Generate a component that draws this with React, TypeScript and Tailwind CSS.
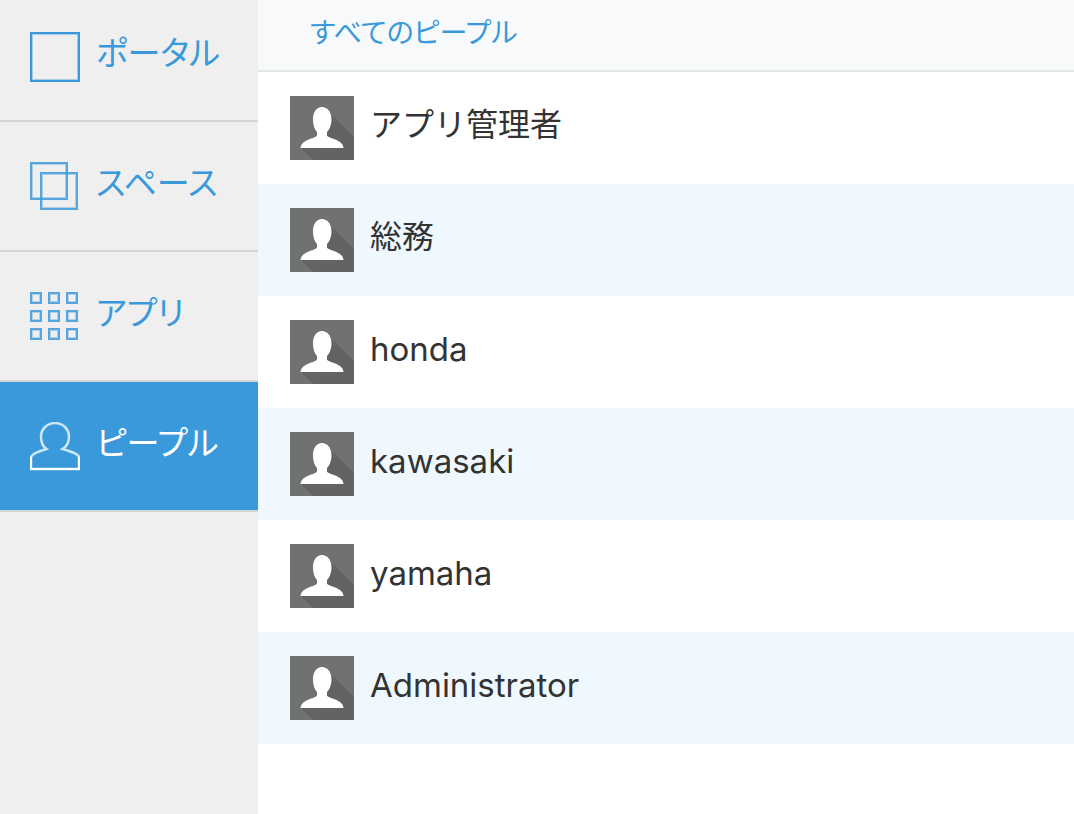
import type { ReactNode } from 'react';

const navItems = [
  { label: 'ポータル', icon: <PortalIcon /> },
  { label: 'スペース', icon: <SpaceIcon /> },
  { label: 'アプリ', icon: <AppsIcon /> },
  { label: 'ピープル', icon: <PeopleIcon />, active: true },
];

const people = [
  { name: 'アプリ管理者' },
  { name: '総務' },
  { name: 'honda', latin: true },
  { name: 'kawasaki', latin: true },
  { name: 'yamaha', latin: true },
  { name: 'Administrator', latin: true },
];

function PortalIcon() {
  return (
    <svg width="50" height="50" viewBox="0 0 50 50" fill="none" stroke="#3a99da" aria-hidden="true">
      <rect x="1" y="1" width="48" height="48" strokeWidth="2" />
      <rect x="2.5" y="2.5" width="45" height="45" strokeOpacity="0.4" />
    </svg>
  );
}

function SpaceIcon() {
  return (
    <svg width="50" height="50" viewBox="0 0 50 50" fill="none" stroke="#3a99da" aria-hidden="true">
      <g strokeWidth="2" strokeOpacity="0.85">
        <rect x="1" y="1" width="36" height="36" />
        <rect x="11" y="11" width="36" height="36" />
      </g>
      <g strokeOpacity="0.35">
        <rect x="2.5" y="2.5" width="33" height="33" />
        <rect x="12.5" y="12.5" width="33" height="33" />
      </g>
    </svg>
  );
}

function AppsIcon() {
  return (
    <svg width="50" height="50" viewBox="0 0 50 50" fill="none" stroke="#3a99da" aria-hidden="true">
      {[1, 19, 37].map((y) =>
        [1, 19, 37].map((x) => (
          <g key={`${x}-${y}`}>
            <rect x={x} y={y} width="10" height="10" strokeWidth="2" strokeOpacity="0.85" />
            <rect x={x + 1.5} y={y + 1.5} width="7" height="7" strokeOpacity="0.35" />
          </g>
        ))
      )}
    </svg>
  );
}

function PeopleIcon() {
  return (
    <svg width="50" height="50" viewBox="0 0 50 50" fill="none" stroke="#fff" aria-hidden="true">
      <path
        d="M1 47V35.5C1 32 8 29.5 16.5 27C13 24.5 11 20 11 15C11 7 17 1 25 1S39 7 39 15C39 20 36.5 24.5 32.5 27C41 29.5 49 32 49 35.5V47Z"
        strokeWidth="2.5"
        strokeOpacity="0.75"
      />
      <path d="M1 35V47H49V35" strokeWidth="2" />
    </svg>
  );
}

function Avatar() {
  return (
    <svg width="64" height="64" viewBox="0 0 64 64" className="shrink-0" aria-hidden="true">
      <rect width="64" height="64" fill="#707271" />
      <path d="M40 17L64 41V64H23L11 52L30 40Z" fill="#626463" />
      <path
        d="M32 11C37.5 11 41.5 16 41.5 23C41.5 29 39.5 33.5 37 36V39.5C37 41.5 49 43.5 52 48C53 49.5 53.5 51 53.5 52H10.5C10.5 51 11 49.5 12 48C15 43.5 27 41.5 27 39.5V36C24.5 33.5 23 29 23 23C23 16 26.5 11 32 11Z"
        fill="#fff"
      />
    </svg>
  );
}

function NavLink({ label, icon, active }: { label: string; icon: ReactNode; active?: boolean }) {
  return (
    <a
      href="#"
      aria-current={active ? 'page' : undefined}
      className={`flex h-[130px] items-start gap-4 border-b-2 border-[#d3d6d6] pl-[30px] pt-10 text-[33px] leading-[42px] ${
        active ? 'bg-[#3a99da] text-white' : 'text-[#3a99da]'
      }`}
    >
      {icon}
      <span className="[font-feature-settings:'palt']">{label}</span>
    </a>
  );
}

export default function App() {
  return (
    <div className="flex min-h-screen bg-white font-['Inter','Noto_Sans_CJK_JP',sans-serif] text-[#333]">
      <nav className="w-[258px] shrink-0 overflow-hidden bg-[#efefef]">
        {/* the first item is partly tucked under the top edge */}
        <div className="-mt-2">
          {navItems.map((item) => (
            <NavLink key={item.label} {...item} />
          ))}
        </div>
      </nav>

      <main className="min-w-0 flex-1">
        <header className="h-[72px] border-b-2 border-[#e3e7e8] bg-[#f7f9fb] pl-[52px] pt-3">
          <a href="#" className="block text-[28px] leading-[42px] text-[#3a99da] [font-feature-settings:'palt']">
            すべてのピープル
          </a>
        </header>
        <ul>
          {people.map(({ name, latin }) => (
            <li key={name} className="even:bg-[#f0f8ff]">
              <a href="#" className="flex h-28 items-start gap-4 px-8 pt-6">
                <Avatar />
                <span className={`leading-[58px] ${latin ? 'text-[33px]' : 'text-[32px]'}`}>{name}</span>
              </a>
            </li>
          ))}
        </ul>
      </main>
    </div>
  );
}
